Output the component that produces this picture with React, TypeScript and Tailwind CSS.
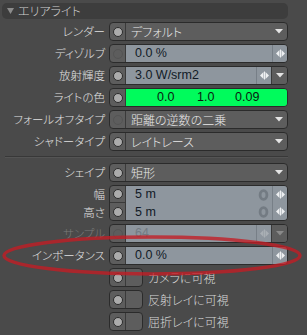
import React from "react";

const JP = { fontFamily: '"Noto Sans CJK JP", "Noto Sans", sans-serif', fontFeatureSettings: '"palt"', fontWeight: 300 } as React.CSSProperties;
const LAT = { fontFamily: '"Liberation Sans", Arial, sans-serif' } as React.CSSProperties;

function Dot({ off }: { off?: boolean }) {
  return (
    <div className="w-[15px] h-full flex items-center justify-center">
      {off ? (
        <div className="w-[10px] h-[10px] rounded-full border border-[#545454]" />
      ) : (
        <div className="w-[10px] h-[10px] rounded-full bg-[#ababab] border border-[#2c2c2c]" />
      )}
    </div>
  );
}

function Slider({ dim }: { dim?: boolean }) {
  const c = dim ? "#a9afb4" : "#eef0f2";
  return (
    <svg width="9" height="9" viewBox="0 0 9 9">
      <polygon points="3.5,1 3.5,8 0,4.5" fill={c} />
      <rect x="4" y="0.5" width="1" height="8" fill={c} />
      <polygon points="5.5,1 5.5,8 9,4.5" fill={c} />
    </svg>
  );
}

function Arrow({ dim }: { dim?: boolean }) {
  return (
    <svg width="8" height="5" viewBox="0 0 8 5">
      <polygon points="0,0 8,0 4,4.5" fill={dim ? "#8a8a8a" : "#e4e4e4"} />
    </svg>
  );
}

function Ring() {
  return (
    <svg width="11" height="12" viewBox="0 0 11 12">
      <ellipse cx="5.5" cy="6" rx="3.4" ry="4.3" fill="none" stroke="#737b83" strokeWidth="2.8" />
    </svg>
  );
}

function Label({ children, dim }: { children: React.ReactNode; dim?: boolean }) {
  return (
    <div className={`w-[105px] shrink-0 mr-[4px] text-right text-[11.5px] leading-[19px] ${dim ? "text-[#7a7a7a]" : "text-[#e0e0e0]"}`} style={JP}>
      {children}
    </div>
  );
}

function Box({ children, h = "h-[19px]" }: { children: React.ReactNode; h?: string }) {
  return (
    <div className={`${h} w-[179px] rounded-[4px] border border-[#2b2b2b] flex overflow-hidden bg-[#5d5d5d]`}>
      {children}
    </div>
  );
}

function DropRow({ label, value, off }: { label: string; value: string; off?: boolean }) {
  return (
    <div className="flex items-center h-[19px]">
      <Label>{label}</Label>
      <Box>
        <Dot off={off} />
        <div className="flex-1 border-l border-[#3a3a3a] flex items-center pl-[5px] text-[12px] text-[#eaeaea]" style={JP}>
          {value}
        </div>
        <div className="w-[14px] flex items-center justify-center pr-[2px]">
          <Arrow />
        </div>
      </Box>
    </div>
  );
}

function NumRow({ label, value, off, dropdown, dim }: { label: string; value: string; off?: boolean; dropdown?: boolean; dim?: boolean }) {
  return (
    <div className="flex items-center h-[19px]">
      <Label dim={dim}>{label}</Label>
      <Box>
        <Dot off={off || dim} />
        <div className={`flex-1 border-l border-[#3a3a3a] bg-[#8e969e] flex items-center pl-[9px] text-[12.5px] ${dim ? "text-[#737a82]" : "text-[#111a26]"}`} style={LAT}>
          {value}
        </div>
        <div className="w-[15px] bg-[#8e969e] border-l border-[#777f87] flex items-center justify-center">
          <Slider dim={dim} />
        </div>
        {dropdown && (
          <div className="w-[16px] border-l border-[#3a3a3a] bg-[#5d5d5d] flex items-center justify-center">
            <Arrow dim={dim} />
          </div>
        )}
      </Box>
    </div>
  );
}

function CheckRow({ label }: { label: string }) {
  return (
    <div className="flex items-center h-[19px]">
      <div className="w-[109px] shrink-0" />
      <div className="h-[19px] w-[34px] rounded-[4px] border border-[#2b2b2b] flex overflow-hidden bg-[#5d5d5d]">
        <Dot />
        <div className="flex-1 border-l border-[#3a3a3a]" />
      </div>
      <div className="ml-[5px] text-[12px] text-[#d8d8d8] leading-[19px]" style={JP}>
        {label}
      </div>
    </div>
  );
}

export default function App() {
  return (
    <div className="w-[307px] h-[335px] bg-[#4a4a4a] relative overflow-hidden">
      <div className="flex flex-col gap-[3px] pt-[3px]">
        <div className="ml-[2px] w-[286px] h-[16px] rounded-[5px] bg-[#3d3d3d] flex items-center pl-[5px] text-[12px] text-[#cfcfcf]" style={JP}>
          <svg width="7" height="6" viewBox="0 0 7 6" className="mr-[4px]">
            <polygon points="0,0 7,0 3.5,6" fill="#8c8c8c" />
          </svg>
          エリアライト
        </div>
        <DropRow label="レンダー" value="デフォルト" />
        <NumRow label="ディゾルブ" value="0.0 %" off />
        <NumRow label="放射輝度" value="3.0 W/srm2" dropdown />
        <div className="flex items-center h-[19px]">
          <Label>ライトの色</Label>
          <Box>
            <Dot />
            <div className="flex-1 border-l border-[#3a3a3a] bg-[#00fb5c] flex items-center pl-[31px] text-[12.5px] text-[#0a1a10]" style={LAT}>
              <span className="w-[40px]">0.0</span>
              <span className="w-[38px]">1.0</span>
              <span>0.09</span>
            </div>
          </Box>
        </div>
        <DropRow label="フォールオフタイプ" value="距離の逆数の二乗" off />
        <DropRow label="シャドータイプ" value="レイトレース" />
        <div className="h-[6px] relative">
          <div className="absolute left-[5px] top-[2px] w-[283px] h-[1px] bg-[#383838]" />
          <div className="absolute left-[5px] top-[3px] w-[283px] h-[1px] bg-[#545454]" />
        </div>
        <DropRow label="シェイプ" value="矩形" />
        <div className="flex h-[36px]">
          <div className="flex flex-col">
            <div className="h-[18px] flex items-center"><Label>幅</Label></div>
            <div className="h-[18px] flex items-center"><Label>高さ</Label></div>
          </div>
          <Box h="h-[36px]">
            <div className="w-[15px] flex flex-col">
              <div className="h-[17px] border-b border-[#3a3a3a]"><Dot /></div>
              <div className="flex-1"><Dot /></div>
            </div>
            <div className="flex-1 border-l border-[#3a3a3a] bg-[#8e969e] flex flex-col text-[12.5px] text-[#111a26]" style={LAT}>
              <div className="h-[17px] flex items-center pl-[9px] pr-[3px]">
                <span className="flex-1">5 m</span>
                <Ring />
              </div>
              <div className="flex-1 flex items-center pl-[9px] pr-[3px]">
                <span className="flex-1">5 m</span>
                <Ring />
              </div>
            </div>
            <div className="w-[15px] bg-[#8e969e] border-l border-[#777f87] flex flex-col">
              <div className="h-[17px] flex items-center justify-center"><Slider /></div>
              <div className="flex-1 flex items-center justify-center"><Slider /></div>
            </div>
          </Box>
        </div>
        <NumRow label="サンプル" value="64" dropdown dim />
        <NumRow label="インポータンス" value="0.0 %" />
        <CheckRow label="カメラに可視" />
        <CheckRow label="反射レイに可視" />
        <CheckRow label="屈折レイに可視" />
      </div>
      <svg className="absolute left-0 top-0 pointer-events-none" width="307" height="335" viewBox="0 0 307 335">
        <ellipse cx="152" cy="255.5" rx="148" ry="18.5" fill="none" stroke="rgba(196,28,36,0.78)" strokeWidth="3.5" />
      </svg>
    </div>
  );
}
